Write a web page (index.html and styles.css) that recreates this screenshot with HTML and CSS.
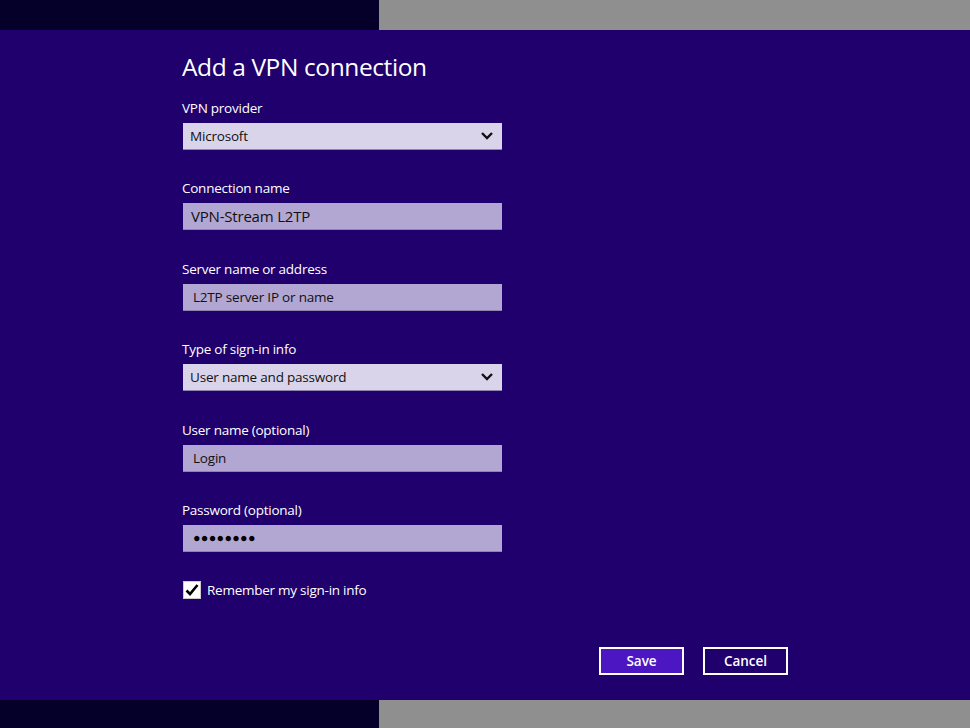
FILE: index.html
```html
<!DOCTYPE html>
<html lang="en">
<head>
  <meta charset="UTF-8">
  <title>Add a VPN connection</title>
  <link rel="stylesheet" href="styles.css">
</head>
<body>

  <div class="bar">
    <div class="bar-dark"></div>
    <div class="bar-grey"></div>
  </div>

  <div class="main">
    <div class="panel">
      <h1>Add a VPN connection</h1>

      <div class="field">
        <label>VPN provider</label>
        <div class="box select">
          <span>Microsoft</span>
          <svg class="chev" width="14" height="10" viewBox="0 0 14 10"><path d="M2 2 L7 7 L12 2" fill="none" stroke="#111" stroke-width="2.4"/></svg>
        </div>
      </div>

      <div class="field">
        <label>Connection name</label>
        <div class="box text big">VPN-Stream L2TP</div>
      </div>

      <div class="field">
        <label>Server name or address</label>
        <div class="box text">L2TP server IP or name</div>
      </div>

      <div class="field">
        <label>Type of sign-in info</label>
        <div class="box select">
          <span>User name and password</span>
          <svg class="chev" width="14" height="10" viewBox="0 0 14 10"><path d="M2 2 L7 7 L12 2" fill="none" stroke="#111" stroke-width="2.4"/></svg>
        </div>
      </div>

      <div class="field">
        <label>User name (optional)</label>
        <div class="box text">Login</div>
      </div>

      <div class="field">
        <label>Password (optional)</label>
        <div class="box text dots">●●●●●●●●</div>
      </div>

      <div class="check">
        <div class="checkbox">
          <svg width="16" height="16" viewBox="0 0 16 16"><path d="M2.5 8.5 L6 12 L13.5 3" fill="none" stroke="#000" stroke-width="2.6"/></svg>
        </div>
        <span>Remember my sign-in info</span>
      </div>

      <div class="buttons">
        <button class="btn save">Save</button>
        <button class="btn">Cancel</button>
      </div>
    </div>
  </div>

  <div class="bar">
    <div class="bar-dark"></div>
    <div class="bar-grey"></div>
  </div>

</body>
</html>
```

FILE: styles.css
```css
body {
  margin: 0;
  height: 728px;
  display: flex;
  flex-direction: column;
  font-family: 'Open Sans', 'Noto Sans', sans-serif;
  background: #20006c;
  color: #fff;
  overflow: hidden;
}

.bar {
  display: flex;
  height: 30px;
}

.bar:last-child {
  height: 28px;
}

.bar-dark {
  width: 379px;
  background: #05002a;
}

.bar-grey {
  flex: 1;
  background: #8f8f8f;
}

.main {
  flex: 1;
  padding-left: 182px;
}

.panel {
  width: 606px;
  padding-top: 20px;
}

h1 {
  margin: 0 0 15px;
  font-size: 24.5px;
  font-weight: 400;
  line-height: 33px;
  letter-spacing: -0.4px;
}

.field {
  margin-bottom: 28.4px;
}

label {
  display: block;
  font-size: 13.5px;
  line-height: 20px;
  margin-bottom: 5px;
  letter-spacing: -0.25px;
}

.box {
  width: 319px;
  height: 27px;
  margin-left: 1px;
  box-sizing: border-box;
  display: flex;
  align-items: center;
  color: #111;
  font-size: 13.5px;
  letter-spacing: -0.2px;
  border-bottom: 1px solid #8d82b0;
}

.select {
  background: #dad4ea;
  padding: 0 8px 0 7px;
  justify-content: space-between;
}

.text {
  background: #b2a6d2;
  padding-left: 10px;
}

.big {
  font-size: 15px;
  padding-left: 8px;
}

.dots {
  font-size: 12.5px;
  letter-spacing: 0.3px;
  color: #000;
}

.check {
  display: flex;
  align-items: center;
  margin-top: 29.5px;
  font-size: 13.5px;
  letter-spacing: -0.25px;
}

.checkbox {
  width: 18px;
  height: 18px;
  box-sizing: border-box;
  background: #fff;
  border: 1px solid #ccc;
  margin-left: 1px;
  margin-right: 6px;
  display: flex;
  align-items: center;
  justify-content: center;
}

.buttons {
  display: flex;
  justify-content: flex-end;
  gap: 19px;
  margin-top: 48px;
}

.btn {
  width: 85px;
  height: 28px;
  background: #20006c;
  color: #fff;
  border: 2px solid #fff;
  font-family: 'Open Sans', sans-serif;
  font-size: 13.5px;
  font-weight: 600;
  padding: 0;
}

.save {
  background: #4c17c2;
}
```
